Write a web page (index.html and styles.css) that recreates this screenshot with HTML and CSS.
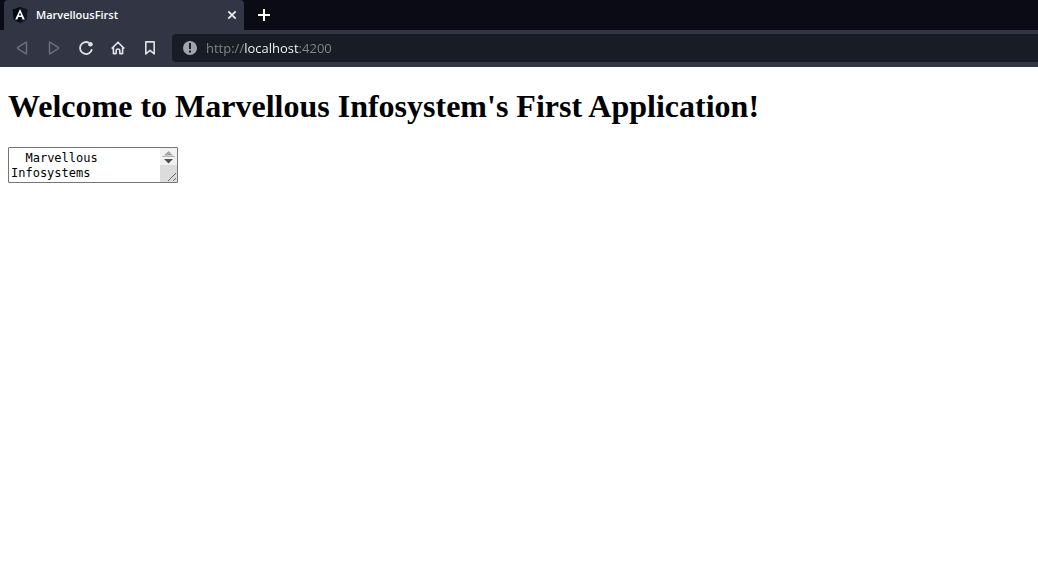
FILE: index.html
```html
<!DOCTYPE html>
<html lang="en">
<head>
<meta charset="utf-8">
<title>MarvellousFirst</title>
<link rel="stylesheet" href="styles.css">
</head>
<body>
<header class="browser">
  <div class="tabs">
    <div class="tab">
      <svg class="favicon" width="16" height="16" viewBox="0 0 16 16" aria-hidden="true">
        <path d="M8 0 15.400 2.600 14.300 12.500 8 16 1.700 12.500.6 2.600Z" fill="#050910"/>
        <path d="M8 0 15.400 2.600 14.300 12.500 8 16Z" fill="#11151d"/>
        <path d="M8 2 3.200 12.400h2.200l.9-2.300h3.400l.9 2.300h2.200ZM8 5.500l1.200 2.900H6.800Z" fill="#fff" fill-rule="evenodd"/>
      </svg>
      <span class="tab-title">MarvellousFirst</span>
      <button class="icon-button" type="button" aria-label="Close tab">
        <svg width="16" height="16" viewBox="0 0 16 16"><path d="m4.300 4.300 7.400 7.400m0-7.400-7.400 7.400" stroke="#f0f0f2" stroke-width="1.700"/></svg>
      </button>
    </div>
    <button class="icon-button new-tab" type="button" aria-label="New tab">
      <svg width="16" height="16" viewBox="0 0 16 16"><path d="M8 2v12M2 8h12" stroke="#fff" stroke-width="2"/></svg>
    </button>
  </div>
  <nav class="toolbar" aria-label="Browser">
    <div class="nav-buttons">
      <button class="icon-button dim" type="button" aria-label="Back" disabled>
        <svg width="16" height="16" viewBox="0 0 16 16"><path d="M12.500 2.800v10.400q0 .9-.8.5L3.800 8.600q-.8-.6 0-1.200l7.900-5.100q.8-.4.8.5Z"/></svg>
      </button>
      <button class="icon-button dim" type="button" aria-label="Forward" disabled>
        <svg width="16" height="16" viewBox="0 0 16 16"><path d="M3.500 2.800v10.400q0 .9.8.5l7.900-5.100q.8-.6 0-1.200L4.300 2.300q-.8-.4-.8.5Z"/></svg>
      </button>
      <button class="icon-button" type="button" aria-label="Reload">
        <svg width="16" height="16" viewBox="0 0 16 16"><path d="M11 2.800A6 6 0 1 0 13.900 9.300" stroke-width="1.800"/><circle cx="12.400" cy="4.300" r="2.300" fill="#e2e2e4" stroke="none"/></svg>
      </button>
      <button class="icon-button" type="button" aria-label="Home">
        <svg width="16" height="16" viewBox="0 0 16 16"><path d="M1.700 8.600 8 2.200l6.300 6.400M3.400 7.200v6.400h2.800v-2.800a1.800 1.800 0 0 1 3.600 0v2.800h2.800V7.200" stroke-width="1.600"/></svg>
      </button>
      <button class="icon-button" type="button" aria-label="Bookmark">
        <svg width="16" height="16" viewBox="0 0 16 16"><path d="M3.800 1.900h8.400v12L8 10.400l-4.200 3.500Z" stroke-width="1.600"/></svg>
      </button>
    </div>
    <div class="address-bar">
      <svg width="16" height="16" viewBox="0 0 16 16" aria-hidden="true"><circle cx="8" cy="8" r="7" fill="#a1a4ad"/><path d="M7 3h2v6H7zM7 10.500h2v2H7z" fill="#191c24"/></svg>
      <input class="address" type="text" aria-label="Address" value="http://localhost:4200">
    </div>
  </nav>
</header>
<main class="page">
  <h1 class="heading">Welcome to Marvellous Infosystem's First Application!</h1>
  <div class="note">
    <textarea class="note-text" aria-label="Company name">  Marvellous Infosystems</textarea>
    <svg class="note-scroll" width="17" height="34" viewBox="0 0 17 34" aria-hidden="true">
      <path d="M0 0h17v17H0z" fill="#f1f1f1"/>
      <path d="M0 17h17v17H0z" fill="#dcdcdc"/>
      <path d="M2 8h13v1H2z" fill="#b5b5b5"/>
      <path d="M4 7.500 8.500 3 13 7.500Z" fill="#a3a3a3"/>
      <path d="m4 11 4.500 4.500L13 11Z" fill="#505050"/>
      <path d="m8 33 8-8m-3 8 3-3" stroke="#666" stroke-width="1"/>
    </svg>
  </div>
</main>
</body>
</html>
```
FILE: styles.css
```css
* { box-sizing: border-box; }
body { margin: 0; background: #fff; color: #000; font-family: "Liberation Serif", "Times New Roman", serif; }
.browser { background: #323544; font-family: "Open Sans", "Noto Sans", sans-serif; }
.tabs { display: flex; align-items: center; height: 30px; padding-left: 4px; background: #0b0b15; }
.tab { display: flex; align-items: center; gap: 8px; width: 240px; height: 30px; padding: 0 4px 0 8px; border-radius: 4px 4px 0 0; background: #323544; }
.favicon { flex: none; }
.tab-title { flex: 1; color: #fff; font-size: 11px; line-height: 16px; font-weight: 600; }
.icon-button { display: flex; flex: none; padding: 0; border: 0; background: none; fill: none; stroke: #e2e2e4; stroke-linejoin: round; }
.new-tab { margin-left: 12px; }
.toolbar { display: flex; align-items: center; gap: 14px; padding: 4px 0 5px 14px; }
.nav-buttons { display: flex; gap: 16px; }
.dim { stroke: #6c6f7c; stroke-width: 1.5px; }
.address-bar { display: flex; flex: 1; align-items: center; gap: 8px; height: 28px; padding-left: 10px; border-radius: 4px 0 0 4px; background: #191c24; }
.address { flex: 1; min-width: 0; height: 24px; padding: 0; border: 0; outline: 0; font: 13px/20px "Open Sans", "Noto Sans", sans-serif; background: linear-gradient(90deg, #85878c 38px, #fff 38px, #fff 93px, #85878c 93px); background-clip: text; -webkit-background-clip: text; -webkit-text-fill-color: transparent; }
.page { padding: 21px 8px; }
.heading { margin: 0 0 22px; font-size: 32px; line-height: 37px; font-weight: 700; }
.note { position: relative; width: 170px; }
.note-text { display: block; width: 170px; height: 36px; padding: 3px 19px 1px 2px; border: 1px solid #767676; border-radius: 1px; background: #fff; color: #000; font: 12px/15px "DejaVu Sans Mono", monospace; overflow: hidden; resize: none; }
.note-scroll { position: absolute; top: 1px; right: 1px; }
```
